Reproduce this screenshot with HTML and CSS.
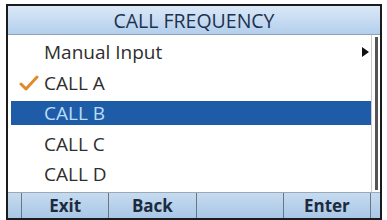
FILE: index.html
```html
<!DOCTYPE html>
<html>
<head>
<meta charset="utf-8">
<link rel="stylesheet" href="styles.css">
</head>
<body>
<div class="frame">
  <div class="header">CALL FREQUENCY</div>
  <div class="body">
    <div class="list">
      <div class="row"><span class="mark"></span><span class="label">Manual Input</span><span class="arrow"></span></div>
      <div class="row"><span class="mark"><svg width="20" height="16" viewBox="0 0 20 16"><path d="M2 9 L7 14 L18 2" fill="none" stroke="#e08a2c" stroke-width="3" stroke-linecap="round" stroke-linejoin="round"/></svg></span><span class="label">CALL A</span></div>
      <div class="row selected"><span class="mark"></span><span class="label">CALL B</span></div>
      <div class="row"><span class="mark"></span><span class="label">CALL C</span></div>
      <div class="row"><span class="mark"></span><span class="label">CALL D</span></div>
    </div>
    <div class="scroll"><div class="thumb"></div></div>
  </div>
  <div class="footer">
    <div class="cell"></div>
    <div class="cell">Exit</div>
    <div class="cell">Back</div>
    <div class="cell"></div>
    <div class="cell">Enter</div>
    <div class="cell end"></div>
  </div>
</div>
</body>
</html>
```
FILE: styles.css
```css
html, body {
  margin: 0;
  padding: 0;
  background: #ffffff;
}
body {
  width: 387px;
  height: 220px;
  overflow: hidden;
  font-family: "Open Sans", "Noto Sans", sans-serif;
}
.frame {
  margin: 4px 5px 0 6px;
  border: 2px solid #1b1b1b;
  border-bottom: none;
  height: 216px;
  display: flex;
  flex-direction: column;
  box-sizing: border-box;
}
.header {
  height: 29px;
  flex: none;
  background: linear-gradient(#dbe8f7, #b3cfec);
  border-bottom: 1px solid #8fa3b8;
  color: #1d3150;
  font-size: 19.5px;
  display: flex;
  align-items: center;
  justify-content: center;
  box-sizing: border-box;
}
.body {
  flex: 1;
  display: flex;
  min-height: 0;
}
.list {
  flex: 1;
  padding-top: 5px;
  padding-left: 3px;
  display: flex;
  flex-direction: column;
  gap: 6.5px;
}
.row {
  height: 24px;
  flex: none;
  display: flex;
  align-items: center;
  color: #2e2e2e;
  font-size: 19px;
}
.mark {
  width: 33px;
  flex: none;
  display: flex;
  align-items: center;
  justify-content: center;
  padding-left: 2px;
  box-sizing: border-box;
}
.label {
  flex: 1;
}
.arrow {
  width: 0;
  height: 0;
  border-top: 5px solid transparent;
  border-bottom: 5px solid transparent;
  border-left: 7px solid #111;
  margin-right: 2px;
}
.selected {
  background: #1f5ca8;
  color: #b9dcf7;
}
.scroll {
  width: 8px;
  flex: none;
  border-left: 1px solid #c9c9c9;
  display: flex;
  justify-content: center;
  padding: 0 0 2px 0;
}
.thumb {
  width: 3px;
  background: #555;
  margin-top: 2px;
}
.footer {
  height: 28px;
  flex: none;
  display: grid;
  grid-template-columns: 14px repeat(4, 1fr) 9px;
  background: linear-gradient(#c6dbf0, #a9c7e6);
  border-top: 1px solid #9aa9b8;
  border-bottom: 2px solid #1b1b1b;
  box-sizing: border-box;
}
.cell {
  border-right: 1px solid #6b7683;
  display: flex;
  align-items: center;
  justify-content: center;
  font-weight: bold;
  font-size: 17px;
  color: #1c2b3e;
}
.cell.end {
  border-right: none;
}
```
